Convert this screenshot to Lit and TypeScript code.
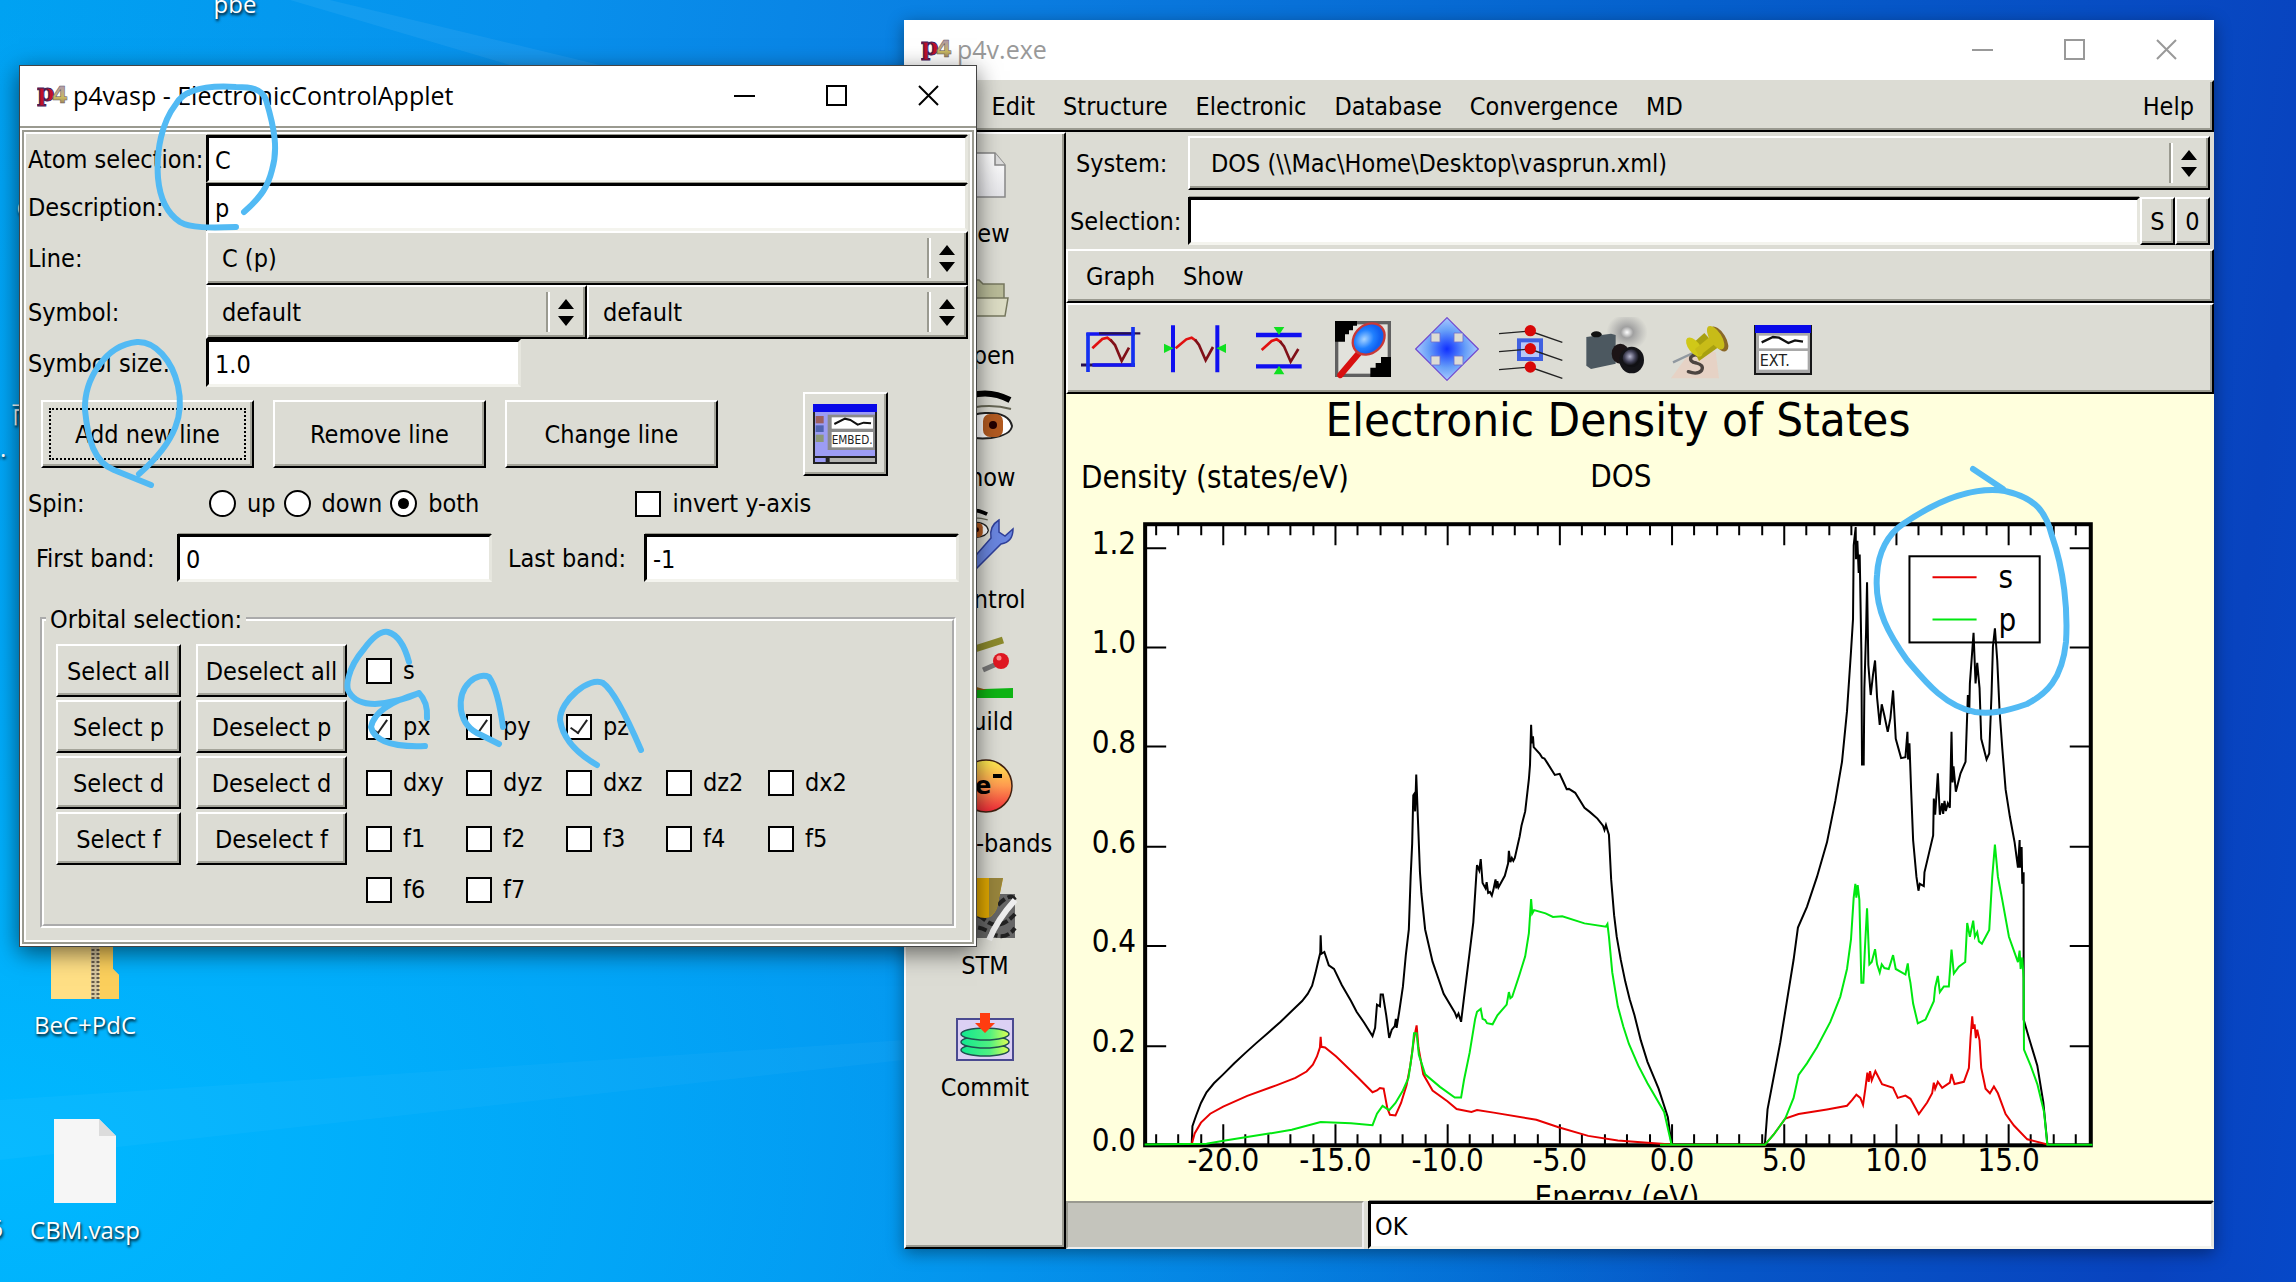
import { LitElement, html, svg, css } from "lit";
import { customElement } from "lit/decorators.js";

const X0 = 605;
const EV = 22.4;
const Y0 = 750;
const DENS = 497;
const FRAME = { left: 79, right: 1023, top: 130, bottom: 750 };

const SERIES = [
  {
    color: "#000",
    occupied:
      "123,1241 250,1241 252,1190 262,1160 275,1125 290,1095 310,1070 335,1045 365,1014 395,985 425,957 455,930 490,898 520,868 548,840 563,820 575,797 584,762 590,735 597,705 598,656 600,708 608,703 620,740 634,750 655,795 680,840 695,870 715,900 738,938 745,915 750,850 758,855 760,822 766,822 775,880 783,943 790,920 798,910 801,890 803,915 810,870 820,800 828,710 836,640 841,490 845,400 848,265 850,262 853,310 856,207 861,345 866,480 870,540 880,640 900,730 915,775 930,820 960,872 965,885 970,875 977,898 985,830 1000,705 1010,620 1018,490 1020,460 1026,475 1030,443 1035,510 1043,525 1046,508 1050,538 1055,535 1060,545 1064,530 1070,500 1072,525 1075,505 1078,522 1095,490 1104,455 1106,420 1110,452 1114,440 1118,448 1122,440 1135,380 1140,350 1150,310 1160,220 1163,180 1166,68 1168,120 1171,100 1173,130 1190,150 1196,160 1202,162 1210,175 1230,208 1243,205 1252,225 1262,248 1268,247 1285,258 1310,300 1325,312 1345,330 1360,350 1364,362 1368,348 1372,362 1376,375 1382,500 1390,600 1397,660 1408,725 1420,785 1432,835 1445,880 1462,950 1480,1010 1510,1085 1535,1165 1545,1241",
    empty:
      "0,1422 314,1422 322,1345 360,1200 380,1110 400,1020 413,950 440,905 470,840 500,765 525,675 545,590 560,480 572,350 578,280 580,120 586,80 587,150 591,110 595,180 598,140 603,350 605,596 610,596 612,430 617,310 620,200 624,380 631,445 638,400 644,370 650,450 658,510 664,465 672,490 682,525 690,495 698,435 706,540 722,582 735,580 741,525 743,585 747,550 752,650 758,760 768,840 774,870 778,855 790,860 792,830 805,790 818,750 820,670 824,705 832,615 838,705 845,680 848,703 852,675 856,697 862,680 868,690 873,525 876,635 879,600 886,655 900,615 915,590 922,445 926,485 928,420 935,350 939,310 945,420 950,375 957,430 962,540 978,585 986,572 993,440 997,340 1003,300 1010,370 1017,480 1025,560 1035,650 1048,710 1062,765 1072,820 1077,760 1078,820 1083,775 1085,855 1089,830 1089,1150 1105,1190 1130,1250 1148,1330 1160,1420",
  },
  {
    color: "#e80000",
    occupied:
      "250,1241 258,1210 275,1180 300,1155 335,1135 400,1105 480,1075 530,1055 560,1037 577,1018 588,995 596,970 598,940 600,968 610,970 640,995 700,1055 738,1095 750,1090 758,1083 768,1085 778,1140 785,1158 800,1160 815,1125 830,1075 840,1020 850,945 857,908 862,970 875,1045 900,1090 940,1120 965,1142 1005,1150 1020,1145 1065,1152 1180,1172 1240,1193 1320,1217 1400,1230 1480,1236 1545,1241",
    empty:
      "0,1422 314,1422 340,1400 375,1365 415,1355 500,1345 560,1337 575,1325 588,1313 600,1320 608,1335 615,1300 621,1265 625,1285 629,1262 634,1282 645,1262 665,1290 698,1298 712,1320 735,1315 750,1322 775,1355 800,1330 815,1310 820,1287 824,1300 832,1285 845,1298 868,1287 873,1268 882,1290 910,1285 925,1255 930,1190 935,1143 938,1170 942,1160 946,1190 950,1172 957,1195 962,1255 975,1300 988,1310 1000,1295 1012,1310 1035,1355 1060,1380 1100,1410 1160,1421",
  },
  {
    color: "#00e810",
    occupied:
      "123,1241 290,1239 340,1230 450,1212 520,1200 598,1178 680,1182 738,1187 750,1155 765,1133 783,1145 800,1125 820,1090 835,1055 845,985 850,930 857,930 863,990 880,1045 920,1080 960,1110 977,1110 985,1060 1000,985 1015,890 1020,870 1030,862 1035,890 1042,893 1047,902 1062,905 1075,880 1100,850 1106,815 1110,832 1115,828 1135,765 1150,715 1160,650 1166,555 1169,595 1174,586 1205,595 1225,605 1250,603 1310,623 1368,632 1372,625 1376,660 1385,760 1400,855 1415,912 1430,960 1455,1020 1480,1070 1525,1150 1545,1241",
    empty:
      "0,1422 314,1422 340,1400 375,1365 400,1320 415,1270 440,1245 470,1210 510,1155 540,1100 560,1040 572,975 580,885 585,855 588,885 592,858 597,890 603,1070 609,1070 614,990 620,908 627,1030 634,1025 644,997 650,1030 658,1048 664,1030 672,1038 685,1040 698,1010 706,1040 735,1052 742,1028 746,1055 750,1070 758,1115 772,1158 795,1150 820,1110 824,1080 832,1055 838,1090 850,1078 865,1078 873,998 880,1050 895,1035 914,1025 920,940 928,970 938,935 943,970 950,960 955,980 964,985 986,955 995,840 1003,770 1012,840 1025,890 1045,970 1072,1025 1077,1000 1080,1040 1085,1015 1089,1060 1090,1215 1110,1250 1130,1290 1150,1350 1160,1422 1295,1422",
  },
];

const MENUS = ["File", "Edit", "Structure", "Electronic", "Database", "Convergence", "MD"];

const ORBITALS = [
  { group: "all", boxes: ["s"], on: false },
  { group: "p", boxes: ["px", "py", "pz"], on: true },
  { group: "d", boxes: ["dxy", "dyz", "dxz", "dz2", "dx2"], on: false },
  { group: "f", boxes: ["f1", "f2", "f3", "f4", "f5"], on: false },
  { group: "", boxes: ["f6", "f7"], on: false },
];

const eye = svg`
  <path d="M2 12 Q28 -4 55 10" fill="none" stroke="#000" stroke-width="6"/>
  <path d="M2 22 Q30 12 56 19" fill="none" stroke="#665" stroke-width="2"/>
  <path d="M2 42 Q8 24 30 23 Q54 22 57 36 Q56 45 36 48 Q14 50 2 42Z" fill="#fff" stroke="#222" stroke-width="2"/>
  <rect x="28" y="24" width="20" height="23" rx="7" fill="#b25a20"/>
  <circle cx="38" cy="35" r="4" fill="#200"/>`;

const SIDE_ITEMS = [
  {
    label: "New",
    icon: svg`<defs><linearGradient id="pg" x2="0" y2="1"><stop offset="0" stop-color="#fff"/><stop offset="1" stop-color="#e4e4e8"/></linearGradient></defs>
      <path d="M10 7H40L50 19V51H10Z" fill="url(#pg)" stroke="#888" stroke-width="1.5"/><path d="M40 7V19H50" fill="#ddd" stroke="#888" stroke-width="1.5"/>`,
  },
  {
    label: "Open",
    icon: svg`<path d="M6 12H24L28 16H49V44H6Z" fill="#b9bb98" stroke="#77785f" stroke-width="1.5"/><path d="M3 30H53L50 48H5Z" fill="#dcdcc4" stroke="#77785f" stroke-width="1.5"/>`,
  },
  { label: "Show", icon: eye },
  {
    label: "Control",
    icon: svg`<g transform="translate(-2 -4) scale(.62)">${eye}</g>
      <path d="M8 58L36 26Q34 14 44 8V20L50 24L58 17Q58 30 46 32L18 60Z" fill="#6a86e0" stroke="#30409a" stroke-width="1.5"/>`,
  },
  {
    label: "Build",
    icon: svg`<path d="M4 20L48 6" stroke="#8c8a2c" stroke-width="7"/><path d="M28 36L44 29" stroke="#777" stroke-width="5"/>
      <circle cx="46" cy="27" r="8" fill="#e01822"/><circle cx="44" cy="24" r="2.500" fill="#ff8c8c"/><path d="M0 56L58 54V64H0Z" fill="#0eb414"/><path d="M4 48L32 56H4Z" fill="#8a5a10"/>`,
  },
  {
    label: "Local-bands",
    icon: svg`<defs><linearGradient id="eg" x2="0" y2="1"><stop offset="0" stop-color="#ffee50"/><stop offset=".5" stop-color="#ff9a50"/><stop offset="1" stop-color="#f02838"/></linearGradient></defs>
      <circle cx="31" cy="30" r="26" fill="url(#eg)" stroke="#402010" stroke-width="1.500"/>
      <text x="20" y="38" font-family="DejaVu Sans, sans-serif" font-weight="bold" font-size="24">e</text><rect x="38" y="18" width="9" height="4"/>`,
  },
  {
    label: "STM",
    icon: svg`<rect x="0" y="16" width="60" height="44" fill="#666"/>
      <path d="M0 26Q12 18 22 28T44 26T60 22M0 40Q16 30 30 42T60 36M0 54Q18 44 34 54T60 50" fill="none" stroke="#222" stroke-width="4" stroke-dasharray="9 3"/>
      <path d="M34 62Q42 42 60 22" stroke="#eee" stroke-width="6" fill="none"/>
      <path d="M8 0H48L42 30Q38 40 30 40Q20 40 16 30Z" fill="#e0a800"/><path d="M34 0H48L42 30Q38 38 34 39Z" fill="#98853c"/>`,
  },
  {
    label: "Commit",
    icon: svg`<defs><linearGradient id="cg"><stop offset="0" stop-color="#10e890"/><stop offset=".6" stop-color="#50f080"/><stop offset="1" stop-color="#e0ff50"/></linearGradient></defs>
      <rect x="2" y="19" width="56" height="41" fill="#dcd0f4" stroke="#4a4a90" stroke-width="2"/>
      <g fill="url(#cg)" stroke="#205050" stroke-width="1.5"><ellipse cx="30" cy="50" rx="24" ry="6"/><ellipse cx="30" cy="42" rx="24" ry="6"/><ellipse cx="30" cy="34" rx="24" ry="6"/></g>
      <path d="M25 13H35V23H40L30 33L20 23H25Z" fill="#ff3c10"/>`,
  },
];

const TOOLS = [
  {
    name: "Select range",
    icon: svg`<path d="M22 51H168" stroke="#1414f0" stroke-width="11"/><path d="M60 49H184" stroke="#28104c" stroke-width="7"/>
      <path d="M6 144H168" stroke="#28104c" stroke-width="9"/><path d="M40 144H168" stroke="#1414f0" stroke-width="10"/>
      <path d="M27 48V165M162 30V148" stroke="#1430f0" stroke-width="11"/>
      <path d="M40 94L70 66L85 62L98 72" fill="none" stroke="#e01010" stroke-width="8"/><path d="M94 68L108 84L128 132L150 92" fill="none" stroke="#801018" stroke-width="8"/>`,
  },
  {
    name: "Horizontal range",
    icon: svg`<path d="M30 25V166M163 25V166" stroke="#1010f0" stroke-width="12"/><path d="M3 80L32 94L3 108ZM189 80L160 94L189 108Z" fill="#10e020"/>
      <path d="M38 94L70 67L86 62L100 72" fill="none" stroke="#e01010" stroke-width="8"/><path d="M96 68L108 84L128 130L150 90" fill="none" stroke="#801018" stroke-width="8"/>`,
  },
  {
    name: "Vertical range",
    icon: svg`<path d="M27 54H164M27 148H164" stroke="#1010f0" stroke-width="13"/><path d="M80 30H112L96 54ZM80 172H112L96 146Z" fill="#10e020"/>
      <path d="M44 99L74 72L89 67L103 76" fill="none" stroke="#e01010" stroke-width="8"/><path d="M99 73L111 88L131 134L154 96" fill="none" stroke="#801018" stroke-width="8"/>`,
  },
  {
    name: "Zoom",
    icon: svg`<defs><radialGradient id="zg" cx=".4" cy=".4"><stop offset="0" stop-color="#a8d4ff"/><stop offset=".6" stop-color="#2080ff"/><stop offset="1" stop-color="#1060f0"/></radialGradient></defs>
      <rect x="17" y="17" width="158" height="158" fill="#e2e2dc" stroke="#606060" stroke-width="10"/>
      <path d="M12 12H78V26H66V40H54V52H42V74H12ZM180 180H118V152H134V138H150V120H180Z" fill="#000"/>
      <path d="M84 108L28 174" stroke="#d81010" stroke-width="19" stroke-linecap="round"/>
      <ellipse cx="113" cy="66" rx="52" ry="42" transform="rotate(-42 113 66)" fill="url(#zg)" stroke="#c83838" stroke-width="7"/>`,
  },
  {
    name: "Move",
    icon: svg`<defs><radialGradient id="mg"><stop offset="0" stop-color="#1030ff"/><stop offset=".6" stop-color="#68a0f8"/><stop offset="1" stop-color="#a8c8ff"/></radialGradient></defs>
      <path d="M96 2L190 96L96 190L2 96Z" fill="url(#mg)" stroke="#7048d0" stroke-width="3.500"/>
      <g fill="#dcdcd4" stroke="#7070d0" stroke-width="2.500"><path d="M48 48H75V75H48ZM117 48H144V75H117ZM48 117H75V144H48ZM117 117H144V144H117Z"/></g>`,
  },
  {
    name: "Pick point",
    icon: svg`<rect x="60" y="70" width="66" height="56" fill="#b8c8f8" stroke="#4060e0" stroke-width="12"/>
      <path d="M0 50L92 42L190 76M0 104L92 96L190 130M0 158L92 150L190 184" fill="none" stroke="#222" stroke-width="4"/>
      <g fill="#d80808"><circle cx="94" cy="41" r="17"/><circle cx="94" cy="95" r="17"/><circle cx="94" cy="150" r="17"/></g>`,
  },
  {
    name: "Snapshot",
    icon: svg`<defs><radialGradient id="fg"><stop offset="0" stop-color="#fff"/><stop offset=".3" stop-color="#a0a0a0"/><stop offset="1" stop-color="#a8a8a8" stop-opacity="0"/></radialGradient>
      <radialGradient id="lg" cx=".4" cy=".4"><stop offset="0" stop-color="#b8b8d0"/><stop offset=".6" stop-color="#44445a"/><stop offset="1" stop-color="#101014"/></radialGradient></defs>
      <ellipse cx="132" cy="46" rx="62" ry="56" fill="url(#fg)"/>
      <path d="M10 60L84 50L98 54V140L24 156L10 146Z" fill="#4c5860"/><ellipse cx="40" cy="52" rx="16" ry="9" fill="#111"/>
      <ellipse cx="112" cy="110" rx="26" ry="30" fill="#1c1416"/><ellipse cx="146" cy="129" rx="37" ry="40" fill="#141418"/><circle cx="146" cy="124" r="27" fill="url(#lg)"/>`,
  },
  {
    name: "Pin",
    icon: svg`<path d="M70 104H146L156 184H12Z" fill="#e8cfc0" opacity=".8"/><path d="M18 136L78 108" stroke="#9098a0" stroke-width="7"/>
      <path d="M102 120Q84 106 72 120Q66 134 88 138Q112 144 104 160Q92 174 64 164" fill="none" stroke="#4c4440" stroke-width="10" stroke-linecap="round"/>
      <path d="M72 84L112 48L152 92L96 132Z" fill="#a8a010"/><ellipse cx="82" cy="90" rx="17" ry="34" transform="rotate(-38 82 90)" fill="#d0c818"/>
      <ellipse cx="156" cy="66" rx="20" ry="42" transform="rotate(-32 156 66)" fill="#8a6828"/><ellipse cx="146" cy="62" rx="18" ry="40" transform="rotate(-32 146 62)" fill="#c8bc18"/>
      <path d="M84 96L128 60L144 80L96 118Z" fill="#c8bc18"/>`,
  },
  {
    name: "External window",
    icon: svg`<rect x="12" y="27" width="168" height="144" fill="#a8a8a8" stroke="#181818" stroke-width="6"/><rect x="12" y="24" width="168" height="24" fill="#0808e8"/>
      <rect x="24" y="56" width="146" height="38" fill="#fff"/><rect x="24" y="102" width="146" height="56" fill="#fff"/>
      <path d="M32 76L66 60L84 62L112 78L132 70L156 74" fill="none" stroke="#111" stroke-width="7"/>
      <text x="26" y="148" font-family="DejaVu Sans Condensed, sans-serif" font-size="48" fill="#222">EXT.</text>`,
  },
];

@customElement("app-root")
export class AppRoot extends LitElement {
  static styles = css`
    :host {
      display: block;
      --face: #dcdcd4;
      --shade: #9a9a90;
      --gtk: "DejaVu Sans Condensed", "DejaVu Sans", sans-serif;
      --segoe: "Open Sans", "Noto Sans", sans-serif;
    }
    * { box-sizing: border-box; }
    .desktop {
      position: relative;
      height: 100vh;
      overflow: hidden;
      background:
        radial-gradient(ellipse 75% 90% at 0% 90%, rgba(0, 184, 255, 1), rgba(0, 170, 250, 0.75) 45%, transparent 100%),
        linear-gradient(98deg, #00a2f2 0%, #0890ec 22%, #0a7ce0 42%, #0560cc 68%, #0843bf 94%, #0648c8 100%);
      font: 25px/30px var(--gtk);
      color: #000;
    }
    .rays, .ink { position: absolute; left: 0; top: 0; pointer-events: none; }
    .ink { z-index: 5; }
    button, input, select { font: inherit; color: inherit; margin: 0; border-radius: 0; }
    svg { display: block; }

    .file {
      position: absolute;
      display: flex;
      flex-direction: column;
      align-items: center;
      gap: 10px;
      width: 160px;
      color: #fff;
      font: 24px/32px var(--segoe);
      text-shadow: 1px 2px 3px #000;
      text-decoration: none;
    }
    .zip { left: 5px; top: 925px; }
    .doc { left: 5px; top: 1116px; }
    .pbe { left: 155px; top: -12px; }
    .cut1 { top: 192px; left: 14px; width: 20px; }
    .cut2 { top: 398px; left: 12px; width: 24px; }
    .cut3 { top: 432px; left: -10px; width: 20px; }
    .cut4 { top: 1212px; left: -11px; width: 14px; }

    .window { position: absolute; display: flex; flex-direction: column; background: var(--face); }
    .main { left: 904px; top: 20px; right: 82px; bottom: 33px; box-shadow: 0 4px 16px rgba(0, 0, 0, 0.4); }
    .applet { left: 19px; top: 65px; width: 958px; border: 1px solid #444; box-shadow: 0 6px 22px rgba(0, 0, 0, 0.55); }
    .titlebar {
      display: flex;
      align-items: center;
      height: 60px;
      flex: none;
      padding: 0 2px 2px 17px;
      background: #fff;
      font: 25px/32px var(--segoe);
    }
    .titlebar .name { flex: 1; padding-left: 5px; }
    .dim { color: #999; }
    .logo { width: 31px; height: 28px; }
    .cap { width: 92px; height: 100%; border: 0; background: none; padding: 0; display: grid; place-items: center; color: #000; }
    .dim .cap { color: #999; }
    .cap svg { width: 21px; height: 21px; fill: none; stroke: currentColor; stroke-width: 2; }

    .bar { display: flex; align-items: center; flex: none; border: 2px solid; border-color: #fff #000 #000 #fff; box-shadow: inset -2px -2px 0 var(--shade); }
    .menubar { height: 52px; padding-left: 6px; border-top-color: var(--face); border-left-color: var(--face); }
    .menu { border: 0; background: none; padding: 2px 14px 0; white-space: nowrap; }
    .help { margin-left: auto; padding-right: 18px; }
    .split { display: flex; flex: 1; min-height: 0; }
    .side {
      width: 162px;
      flex: none;
      display: flex;
      flex-direction: column;
      align-items: center;
      gap: 22px;
      padding-top: 12px;
      border: 2px solid;
      border-color: #fff #000 #000 #fff;
      box-shadow: inset -2px -2px 0 var(--shade);
    }
    .sidebtn { display: flex; flex-direction: column; align-items: center; gap: 13px; border: 0; padding: 0; background: none; height: 100px; flex: none; }
    .sidebtn svg { width: 60px; height: 60px; overflow: visible; flex: none; }
    .content { flex: 1; min-width: 0; display: flex; flex-direction: column; }
    .pick { display: grid; grid-template-columns: 122px 1fr; padding: 4px 4px 4px 0; row-gap: 6px; align-items: center; flex: none; }
    .pick .sys { padding-left: 10px; }
    .pick .sel { padding-left: 4px; }
    .selrow { display: flex; align-items: stretch; padding-top: 1px; }
    .selrow .entry { flex: 1; min-width: 0; }
    .mini { width: 35px; padding: 2px 0 0; }
    .graphbar { height: 54px; padding-left: 4px; }
    .toolbar { height: 91px; gap: 20px; padding-left: 11px; }
    .tool { width: 64px; height: 64px; border: 0; padding: 0; background: none; flex: none; }
    .tool svg { width: 64px; height: 64px; }
    .canvas { flex: 1; min-height: 0; overflow: hidden; background: #ffffdd; }
    .canvas svg { width: 100%; font-family: var(--gtk); font-size: 31px; }
    .status { display: flex; height: 48px; flex: none; gap: 4px; background: var(--face); }
    .progress { width: 298px; background: #c4c4bc; border: 2px solid; border-color: var(--shade) #eee #eee var(--shade); }
    .status .entry { flex: 1; min-width: 0; padding-left: 4px; }

    .push { background: var(--face); border: 2px solid; border-color: #fff #000 #000 #fff; box-shadow: inset -2px -2px 0 #a4a49a; text-align: center; white-space: nowrap; }
    .entry { height: 48px; width: 100%; background: #fff; border: 3px solid; border-color: #000 #e6e6de #f4f4ee #000; padding: 2px 6px 0; box-shadow: 0 -2px 0 -1px var(--shade); outline: none; }
    .combo { position: relative; display: block; min-width: 0; }
    .combo select {
      appearance: none;
      display: block;
      width: 100%;
      height: 54px;
      padding: 2px 60px 0 14px;
      background: var(--face);
      border: 2px solid;
      border-color: #fff #000 #000 #fff;
      box-shadow: inset -2px -2px 0 var(--shade);
    }
    .content .combo select { padding-left: 21px; }
    .combo svg { position: absolute; right: 11px; top: 7px; width: 33px; height: 40px; pointer-events: none; }

    .frame { padding: 0 2px 2px; background: #fff; border-top: 2px solid var(--shade); }
    .form { margin-top: 2px; padding: 3px 4px 14px; background: var(--face); border: 2px solid var(--shade); box-shadow: inset 0 0 0 2px #fff; }
    .fields { display: grid; grid-template-columns: 178px 1fr; align-items: center; }
    .pair { display: grid; grid-template-columns: 381px 1fr; }
    .fields .short { width: 315px; }
    .fields label, .bands label, .pick label { white-space: nowrap; padding-top: 2px; }
    .actions { display: flex; align-items: center; gap: 19px; padding: 5px 0 0 13px; }
    .wide { width: 213px; height: 68px; padding: 2px 0 0; display: grid; place-items: center; }
    .first { padding: 6px; }
    .first span { width: 100%; height: 100%; display: grid; place-items: center; border: 2px dotted #000; padding-top: 2px; }
    .embed { width: 85px; height: 84px; margin-left: 66px; padding: 8px; }
    .embed svg { width: 64px; height: 60px; }
    .spin { display: flex; align-items: center; height: 55px; gap: 8px; }
    .spin .lead { width: 173px; }
    .spin .invert { margin-left: 148px; }
    .opt { display: flex; align-items: center; gap: 11px; white-space: nowrap; }
    .opt input { appearance: none; width: 26px; height: 26px; flex: none; background: #fff; border: 2px solid #000; display: grid; place-items: center; }
    .opt input[type="radio"] { width: 27px; height: 27px; border-radius: 50%; }
    .opt input[type="radio"]:checked::before { content: ""; width: 11px; height: 11px; border-radius: 50%; background: #000; }
    .opt input[type="checkbox"]:checked::before { content: ""; width: 8px; height: 15px; border: solid #222; border-width: 0 2px 2px 0; transform: rotate(35deg); margin-top: -5px; }
    .bands { display: grid; grid-template-columns: 141px 1fr 152px 1fr; align-items: center; padding: 3px 9px 0 8px; }
    .bands .second { padding-left: 16px; }
    .orbit { margin: 23px 12px 0; padding: 11px 0 12px 12px; border: 4px groove #fff; min-width: 0; }
    .orbit legend { padding: 0 4px; margin-left: -10px; height: 28px; line-height: 30px; }
    .orbrow { display: grid; grid-template-columns: 140px 170px repeat(3, 100px) 102px 100px; align-items: center; min-height: 44px; margin-bottom: 3px; }
    .orbrow:last-child { margin-bottom: 0; }
    .orbrow .push { height: 53px; padding: 2px 0 0; }
    .orbrow .sa { width: 125px; }
    .orbrow .da { width: 151px; }
    .orbrow .start { grid-column: 3; }
  `;

  private logo = svg`<defs><linearGradient id="l4" x2="0" y2="1"><stop offset="0" stop-color="#a890c8"/><stop offset=".6" stop-color="#c8b860"/><stop offset="1" stop-color="#7a5a60"/></linearGradient></defs>
    <text x="0" y="20" font-family="DejaVu Serif, serif" font-weight="bold" font-size="25" fill="#c01028" stroke="#402058" stroke-width="1">p</text>
    <text x="15" y="22" font-family="DejaVu Sans, sans-serif" font-weight="bold" font-size="23" fill="url(#l4)" stroke="#68585c" stroke-width=".5">4</text>`;

  private titleBar(name: string, dim: boolean) {
    return html`<header class="titlebar ${dim ? "dim" : ""}">
      <svg class="logo" viewBox="0 0 31 28">${this.logo}</svg>
      <span class="name">${name}</span>
      <button class="cap" aria-label="Minimize"><svg viewBox="0 0 21 21"><path d="M0 11H21" /></svg></button>
      <button class="cap" aria-label="Maximize"><svg viewBox="0 0 21 21"><path d="M1 1H20V20H1Z" /></svg></button>
      <button class="cap" aria-label="Close"><svg viewBox="0 0 21 21"><path d="M1 1L20 20M20 1L1 20" /></svg></button>
    </header>`;
  }

  private combo(id: string, value: string, label: string) {
    return html`<span class="combo"
      ><select id=${id} aria-label=${label}><option>${value}</option></select
      ><svg viewBox="0 0 33 40"><path d="M4 0V40" stroke="#9a9a90" stroke-width="2" /><path d="M6 0V40" stroke="#fff" stroke-width="2" /><path d="M23 7L31 17H15ZM23 34L31 24H15Z" /></svg
    ></span>`;
  }

  private check(name: string, on: boolean, cls = "") {
    return html`<label class="opt ${cls}"><input type="checkbox" ?checked=${on} />${name}</label>`;
  }

  private ticks() {
    const out = [];
    const { left, right, top, bottom } = FRAME;
    for (let e = -23; e <= 18; e++) {
      const x = Math.round(X0 + e * EV);
      const len = e % 5 === 0 ? 21 : 11;
      out.push(svg`<path d="M${x} ${top}v${len}M${x} ${bottom}v${-len}"/>`);
    }
    for (let i = 1; i <= 6; i++) {
      const y = Math.round(Y0 - i * 0.2 * DENS);
      out.push(svg`<path d="M${left} ${y}h21M${right} ${y}h-21"/>`);
    }
    return out;
  }

  private plot() {
    const { left, right, top, bottom } = FRAME;
    return html`<svg viewBox="0 0 1146 806" role="img" aria-label="Electronic Density of States">
      <rect x=${left} y=${top} width=${right - left} height=${bottom - top} fill="#fff" stroke="#000" stroke-width="4" />
      <text x="551" y="42" font-size="47" text-anchor="middle">Electronic Density of States</text>
      <text x="15" y="94">Density (states/eV)</text>
      <text x="554" y="93" text-anchor="middle">DOS</text>
      <text x="550" y="813" text-anchor="middle">Energy (eV)</text>
      <g stroke="#000" stroke-width="2">${this.ticks()}</g>
      ${[0, 0.2, 0.4, 0.6, 0.8, 1, 1.2].map(
        (v) => svg`<text x="70" y=${Math.round(Y0 + 6 - v * DENS)} text-anchor="end">${v.toFixed(1)}</text>`,
      )}
      ${[-20, -15, -10, -5, 0, 5, 10, 15].map(
        (v) => svg`<text x=${Math.round(X0 + v * EV)} y="776" text-anchor="middle">${v.toFixed(1)}</text>`,
      )}
      <rect x="842" y="162" width="130" height="86" fill="#fff" stroke="#000" stroke-width="2" />
      <path d="M865 183H909" stroke="#e80000" stroke-width="2" />
      <path d="M865 225H909" stroke="#00e810" stroke-width="2" />
      <text x="931" y="194">s</text>
      <text x="931" y="237">p</text>
      ${SERIES.map(
        (s) => svg`<g fill="none" stroke=${s.color} stroke-width="2">
          <polyline vector-effect="non-scaling-stroke" transform="translate(33 306) scale(.3699 .3571)" points=${s.occupied} />
          <polyline vector-effect="non-scaling-stroke" transform="translate(593 96) scale(.3333 .4596)" points=${s.empty} />
        </g>`,
      )}
    </svg>`;
  }

  render() {
    return html`<main class="desktop">
      <svg class="rays" width="2296" height="1282" viewBox="0 0 2296 1282">
        <path d="M290 0L510 65H600L330 0Z" fill="#fff" opacity=".06" />
        <path d="M0 1100L904 1040V1060L0 1160Z" fill="#fff" opacity=".03" />
      </svg>
      <a class="file pbe" href="#">pbe</a>
      <a class="file cut1" href="#">C</a>
      <a class="file cut2" href="#">而</a>
      <a class="file cut3" href="#">..</a>
      <a class="file cut4" href="#">6</a>
      <a class="file zip" href="#">
        <svg width="70" height="74" viewBox="0 0 70 74">
          <path d="M1 0H63V44L69 50V74H1Z" fill="#ffdf85" /><path d="M50 0H63V44L69 50V74H50Z" fill="#fbcf5c" />
          <path d="M45 0V74" stroke="#d8c8a0" stroke-width="8" /><path d="M43 0V74M48 0V74" stroke="#665a48" stroke-width="3" stroke-dasharray="2 2" />
        </svg>
        BeC+PdC
      </a>
      <a class="file doc" href="#">
        <svg width="64" height="88" viewBox="0 0 64 88"><path d="M1 3H46L63 20V87H1Z" fill="#f6f6f6" /><path d="M46 3V20H63Z" fill="#dcdcdc" /></svg>
        CBM.vasp
      </a>

      <section class="window main">
        ${this.titleBar("p4v.exe", true)}
        <nav class="bar menubar">
          ${MENUS.map((m) => html`<button class="menu">${m}</button>`)}
          <button class="menu help">Help</button>
        </nav>
        <div class="split">
          <nav class="side">
            ${SIDE_ITEMS.map(
              (i) => html`<button class="sidebtn"><svg viewBox="0 0 60 60">${i.icon}</svg>${i.label}</button>`,
            )}
          </nav>
          <div class="content">
            <div class="pick">
              <label class="sys" for="system">System:</label>
              ${this.combo("system", "DOS (\\\\Mac\\Home\\Desktop\\vasprun.xml)", "System")}
              <label class="sel" for="selection">Selection:</label>
              <div class="selrow">
                <input class="entry" id="selection" />
                <button class="push mini">S</button><button class="push mini">0</button>
              </div>
            </div>
            <nav class="bar graphbar">
              <button class="menu">Graph</button><button class="menu">Show</button>
            </nav>
            <div class="bar toolbar">
              ${TOOLS.map(
                (t) => html`<button class="tool" aria-label=${t.name}><svg viewBox="0 0 192 192">${t.icon}</svg></button>`,
              )}
            </div>
            <div class="canvas">${this.plot()}</div>
            <footer class="status">
              <div class="progress"></div>
              <input class="entry" aria-label="Status" value="OK" readonly />
            </footer>
          </div>
        </div>
      </section>

      <section class="window applet">
        ${this.titleBar("p4vasp - ElectronicControlApplet", false)}
        <div class="frame">
          <form class="form" @submit=${(e: Event) => e.preventDefault()}>
            <div class="fields">
              <label for="atoms">Atom selection:</label><input class="entry" id="atoms" value="C" />
              <label for="desc">Description:</label><input class="entry" id="desc" value="p" />
              <label for="line">Line:</label>${this.combo("line", "C (p)", "Line")}
              <label for="symbol">Symbol:</label>
              <div class="pair">${this.combo("symbol", "default", "Symbol")}${this.combo("symbol2", "default", "Symbol style")}</div>
              <label for="size">Symbol size:</label><input class="entry short" id="size" value="1.0" />
            </div>
            <div class="actions">
              <button class="push wide first"><span>Add new line</span></button>
              <button class="push wide">Remove line</button>
              <button class="push wide">Change line</button>
              <button class="push embed" aria-label="Embed">
                <svg viewBox="0 0 192 180">
                  <rect width="192" height="180" fill="#222" /><rect x="6" y="24" width="180" height="132" fill="#9c9cf4" />
                  <rect width="192" height="24" fill="#0808e8" /><rect x="6" y="162" width="32" height="12" fill="#9c9cf4" /><rect x="50" y="162" width="136" height="12" fill="#b4b4b0" />
                  <rect x="44" y="32" width="142" height="106" fill="#8a8a8a" /><rect x="56" y="40" width="124" height="34" fill="#fff" /><rect x="56" y="84" width="124" height="46" fill="#fff" />
                  <path d="M64 60L96 44L112 48L134 62L152 56L174 58" fill="none" stroke="#111" stroke-width="6" />
                  <rect x="8" y="36" width="24" height="22" fill="#9c6060" /><rect x="8" y="64" width="24" height="20" fill="#5064b0" /><rect x="8" y="92" width="24" height="22" fill="#8c9878" />
                  <text x="56" y="121" font-family="DejaVu Sans Condensed, sans-serif" font-size="35" fill="#222">EMBED.</text>
                </svg>
              </button>
            </div>
            <div class="spin">
              <span class="lead">Spin:</span>
              ${["up", "down", "both"].map(
                (s) => html`<label class="opt"><input type="radio" name="spin" ?checked=${s === "both"} />${s}</label>`,
              )}
              ${this.check("invert y-axis", false, "invert")}
            </div>
            <div class="bands">
              <label for="fb">First band:</label><input class="entry" id="fb" value="0" />
              <label class="second" for="lb">Last band:</label><input class="entry" id="lb" value="-1" />
            </div>
            <fieldset class="orbit">
              <legend>Orbital selection:</legend>
              ${ORBITALS.map(
                (o) => html`<div class="orbrow">
                  ${o.group
                    ? html`<button class="push sa">Select ${o.group}</button><button class="push da">Deselect ${o.group}</button>`
                    : ""}
                  ${o.boxes.map((b, i) => this.check(b, o.on, i === 0 ? "start" : ""))}
                </div>`,
              )}
            </fieldset>
          </form>
        </div>
      </section>

      <svg class="ink" width="2296" height="1282" viewBox="0 0 2296 1282" fill="none" stroke="#52baf4" stroke-width="6" stroke-linecap="round" stroke-linejoin="round">
        <path d="M244 212C262 196 268 186 272 170C278 150 275 130 266 100C262 88 250 87 236 87C206 85 184 90 176 104C162 122 156 150 158 178C160 200 168 214 180 222C190 228 210 228 236 227" />
        <path d="M139 474C178 440 184 412 178 386C172 360 155 341 137 342C105 345 84 380 85 410C88 440 94 462 114 470L151 485" />
        <path d="M409 662Q402 636 388 632Q378 630 364 649C346 670 346 688 349 692Q356 704 375 704Q400 702 419 693Q428 702 427 718M419 693C390 702 374 712 371 727Q376 748 425 746" />
        <path d="M503 727Q498 690 489 677C478 672 458 684 461 710Q464 728 481 735L499 744" />
        <path d="M641 750Q616 692 603 683C590 676 560 700 560 720Q564 746 597 765" />
        <path d="M1973 469L2003 489M1903 524C1950 492 1984 488 2005 491C2036 498 2046 512 2052 536C2064 570 2068 610 2066 642C2062 680 2046 694 2027 704C2004 712 1990 714 1975 712C1944 706 1924 680 1907 660C1890 636 1874 610 1877 575C1878 552 1888 534 1903 524" />
      </svg>
    </main>`;
  }
}
